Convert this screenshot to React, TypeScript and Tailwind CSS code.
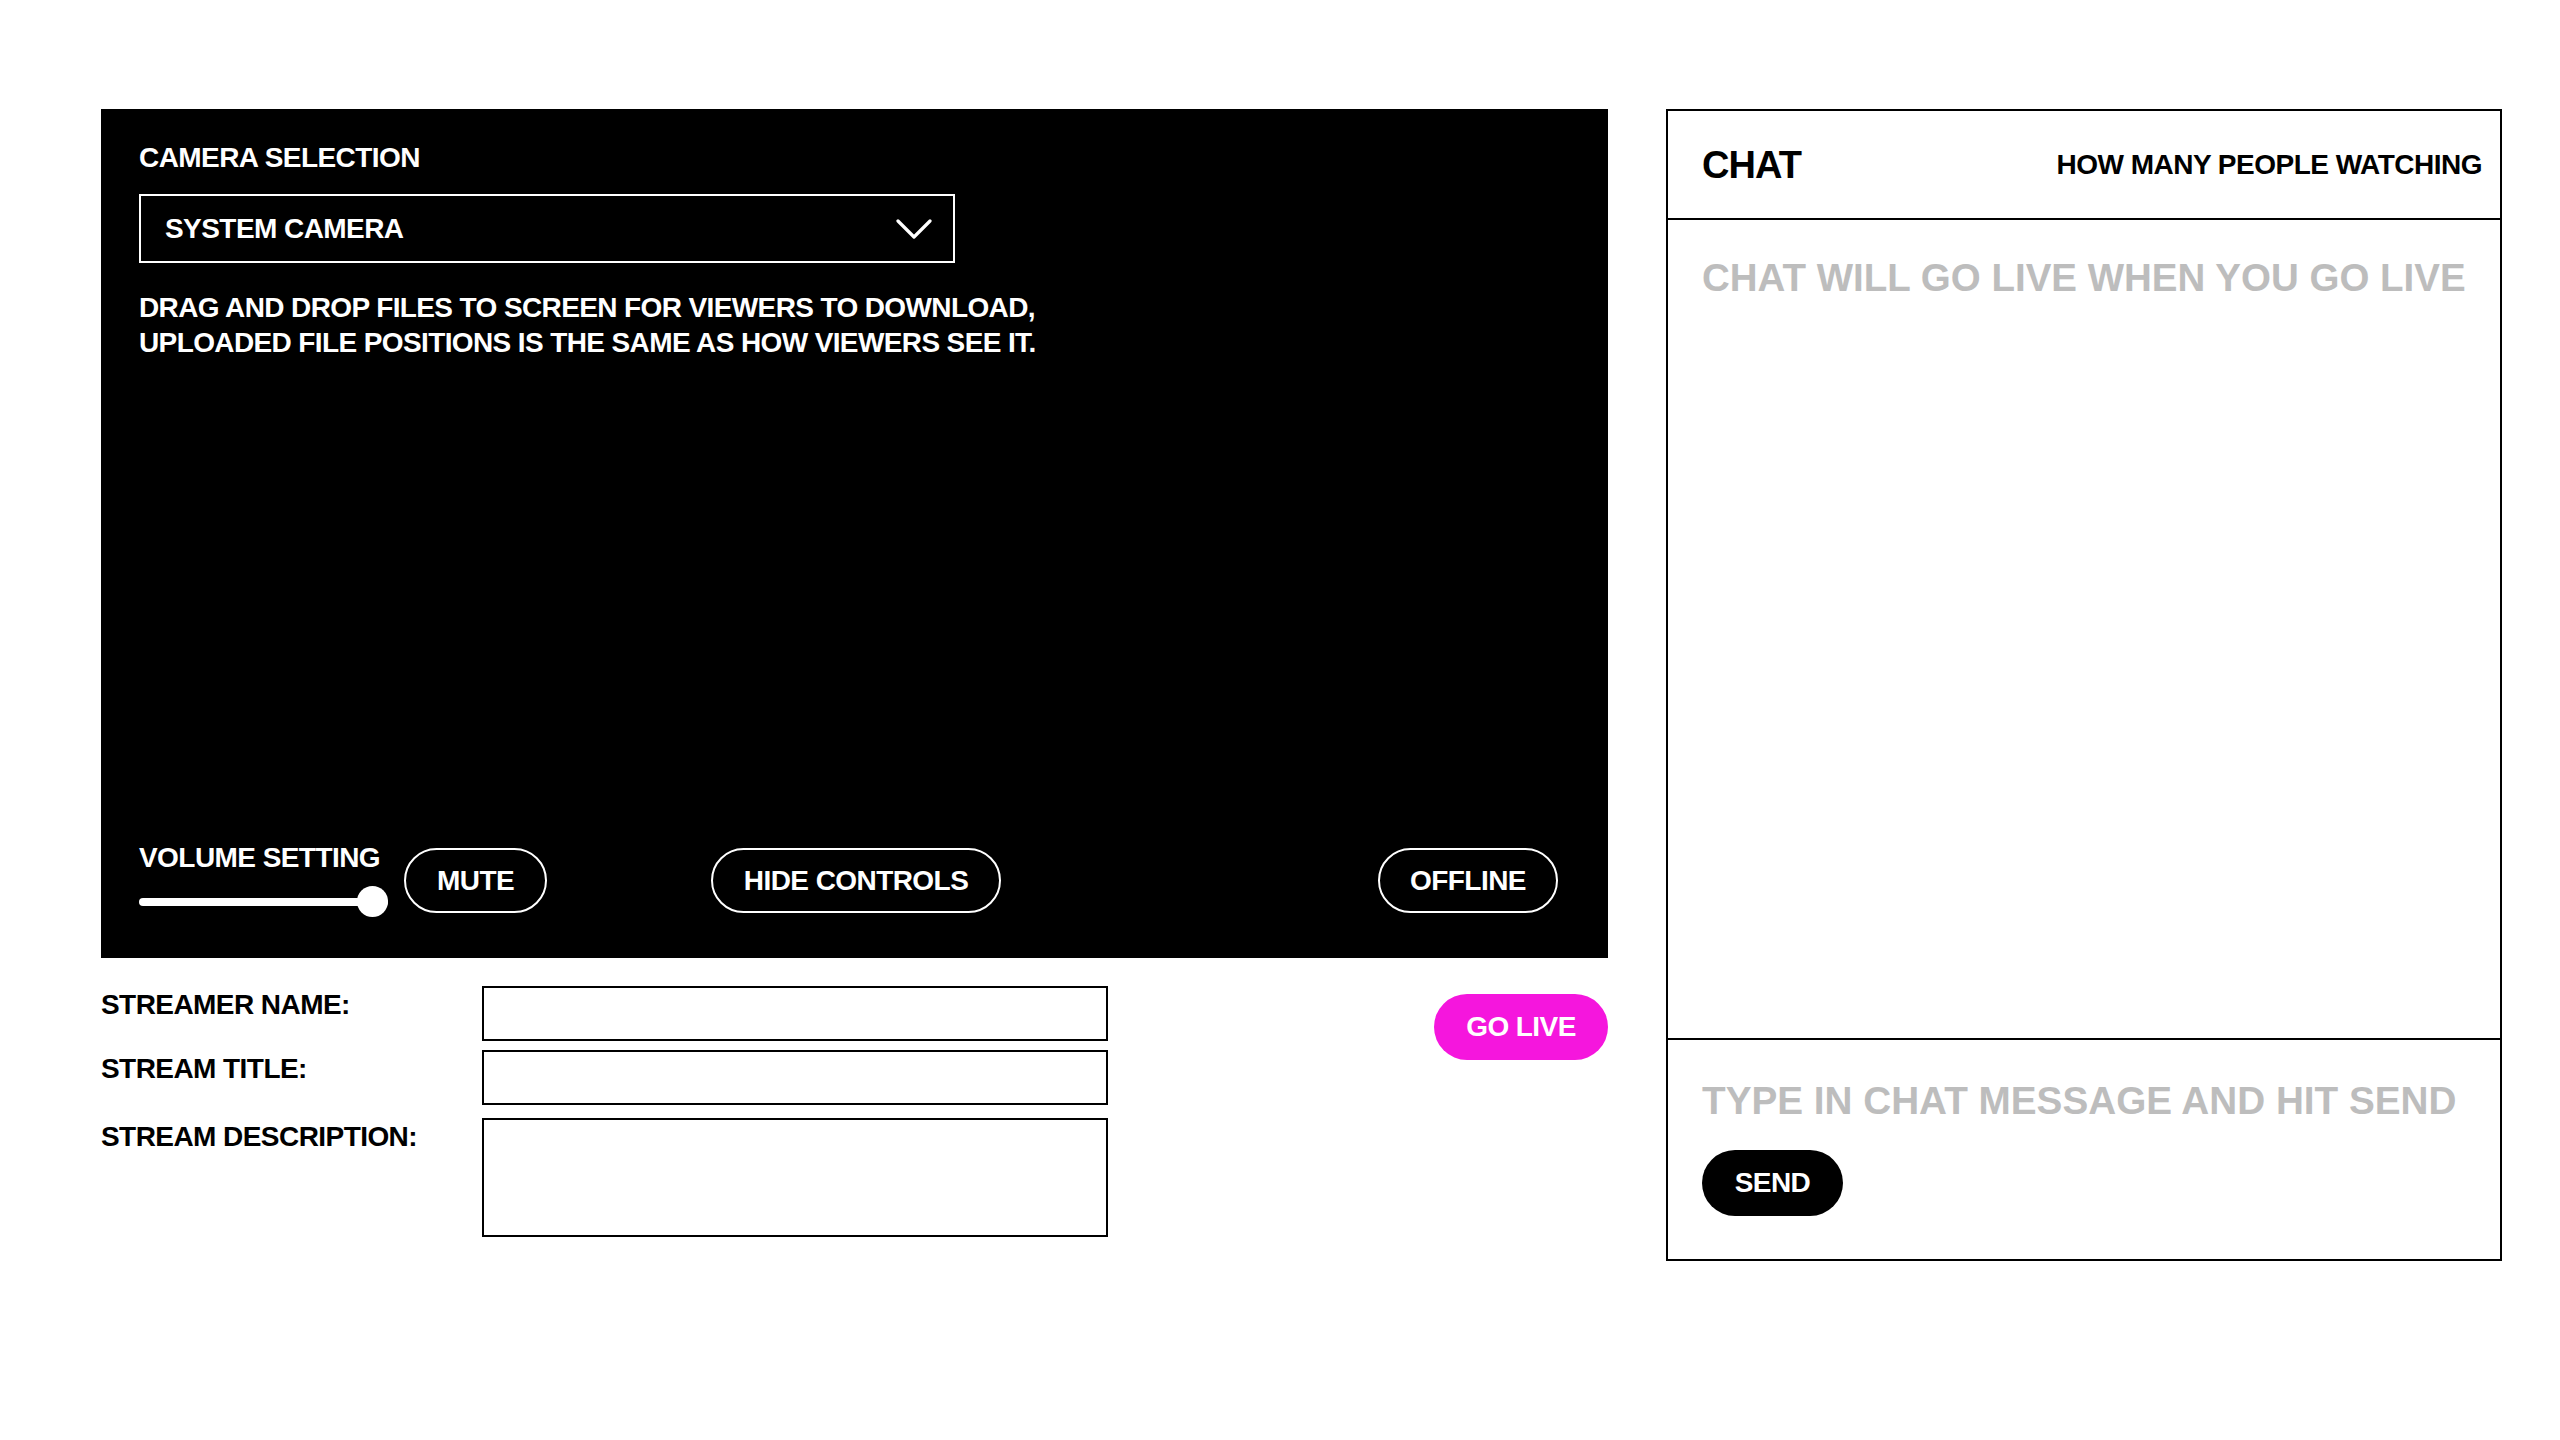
import { useState } from 'react'

const font = "font-['Liberation_Sans',Arial,sans-serif]"

function PillButton({ label, width }: { label: string; width: string }) {
  return (
    <button className={`flex h-[65px] ${width} items-center justify-center rounded-full border-2 border-white text-[28px] font-bold leading-none tracking-[-0.02em] text-white`}>
      {label}
    </button>
  )
}

function Field({ label, tall }: { label: string; tall?: boolean }) {
  return (
    <div className="flex items-start">
      <label className="w-[381px] pt-[5px] text-[28px] font-bold leading-none tracking-[-0.02em] text-black">{label}</label>
      {tall ? (
        <textarea className="h-[119px] w-[626px] resize-none border-2 border-black bg-white px-3 py-2 text-[24px] outline-none" />
      ) : (
        <input className="h-[55px] w-[626px] border-2 border-black bg-white px-3 text-[24px] outline-none" />
      )}
    </div>
  )
}

export default function App() {
  const [volume] = useState(100)

  return (
    <div className={`${font} min-h-screen w-full bg-white`}>
      <div className="flex items-start gap-[58px] pl-[101px] pt-[109px]">

        {/* Broadcaster side */}
        <div className="flex w-[1507px] flex-col">
          <div className="flex h-[849px] flex-col justify-between bg-black pb-[41px] pl-[38px] pr-[50px] pt-[35px]">
            <div className="flex flex-col">
              <p className="text-[28px] font-bold leading-none tracking-[-0.02em] text-white">CAMERA SELECTION</p>
              <div className="mt-[22px] flex h-[69px] w-[816px] items-center justify-between border-2 border-white pl-[24px] pr-[21px]">
                <span className="text-[28px] font-bold leading-none tracking-[-0.02em] text-white">SYSTEM CAMERA</span>
                <svg width="36" height="20" viewBox="0 0 36 20" fill="none">
                  <polyline points="2,2 18,18 34,2" stroke="white" strokeWidth="3.2" strokeLinecap="round" strokeLinejoin="round" />
                </svg>
              </div>
              <p className="mt-[27px] text-[28px] font-bold leading-[35px] tracking-[-0.022em] text-white">
                DRAG AND DROP FILES TO SCREEN FOR VIEWERS TO DOWNLOAD,<br />
                UPLOADED FILE POSITIONS IS THE SAME AS HOW VIEWERS SEE IT.
              </p>
            </div>

            {/* Controls row */}
            <div className="flex items-center">
              <div className="flex w-[249px] flex-col">
                <p className="text-[28px] font-bold leading-none tracking-[-0.02em] text-white">VOLUME SETTING</p>
                <div className="relative mt-[14px] flex h-[31px] items-center">
                  <div className="h-[8px] w-full rounded-full bg-white" style={{ width: `${volume}%` }} />
                  <div className="absolute right-0 top-0 h-[31px] w-[31px] rounded-full bg-white" />
                </div>
              </div>
              <div className="ml-[16px]">
                <PillButton label="MUTE" width="w-[143px]" />
              </div>
              <div className="ml-[164px]">
                <PillButton label="HIDE CONTROLS" width="w-[290px]" />
              </div>
              <div className="ml-auto">
                <PillButton label="OFFLINE" width="w-[180px]" />
              </div>
            </div>
          </div>

          {/* Stream details */}
          <div className="mt-[28px] flex items-start">
            <div className="flex flex-col">
              <Field label="STREAMER NAME:" />
              <div className="mt-[9px]"><Field label="STREAM TITLE:" /></div>
              <div className="mt-[13px]"><Field label="STREAM DESCRIPTION:" tall /></div>
            </div>
            <button className="ml-auto mt-[8px] flex h-[66px] w-[174px] items-center justify-center rounded-full bg-[#f516dd] text-[28px] font-bold leading-none tracking-[-0.02em] text-white">
              GO LIVE
            </button>
          </div>
        </div>

        {/* Chat */}
        <div className="flex h-[1152px] w-[836px] flex-col border-2 border-black">
          <div className="flex h-[109px] items-center justify-between border-b-2 border-black pl-[34px] pr-[18px]">
            <span className="text-[38px] font-bold leading-none tracking-tight text-black">CHAT</span>
            <span className="text-[28px] font-bold leading-none tracking-[-0.018em] text-black">HOW MANY PEOPLE WATCHING</span>
          </div>
          <div className="flex-1 pl-[34px] pt-[39px]">
            <p className="text-[38.5px] font-bold leading-none text-[#bdbdbd]">CHAT WILL GO LIVE WHEN YOU GO LIVE</p>
          </div>
          <div className="flex h-[221px] flex-col border-t-2 border-black pl-[34px] pt-[42px]">
            <p className="text-[38.7px] font-bold leading-none text-[#bdbdbd]">TYPE IN CHAT MESSAGE AND HIT SEND</p>
            <button className="mt-[29px] flex h-[66px] w-[141px] items-center justify-center rounded-full bg-black text-[28px] font-bold leading-none tracking-[-0.02em] text-white">
              SEND
            </button>
          </div>
        </div>
      </div>
    </div>
  )
}
